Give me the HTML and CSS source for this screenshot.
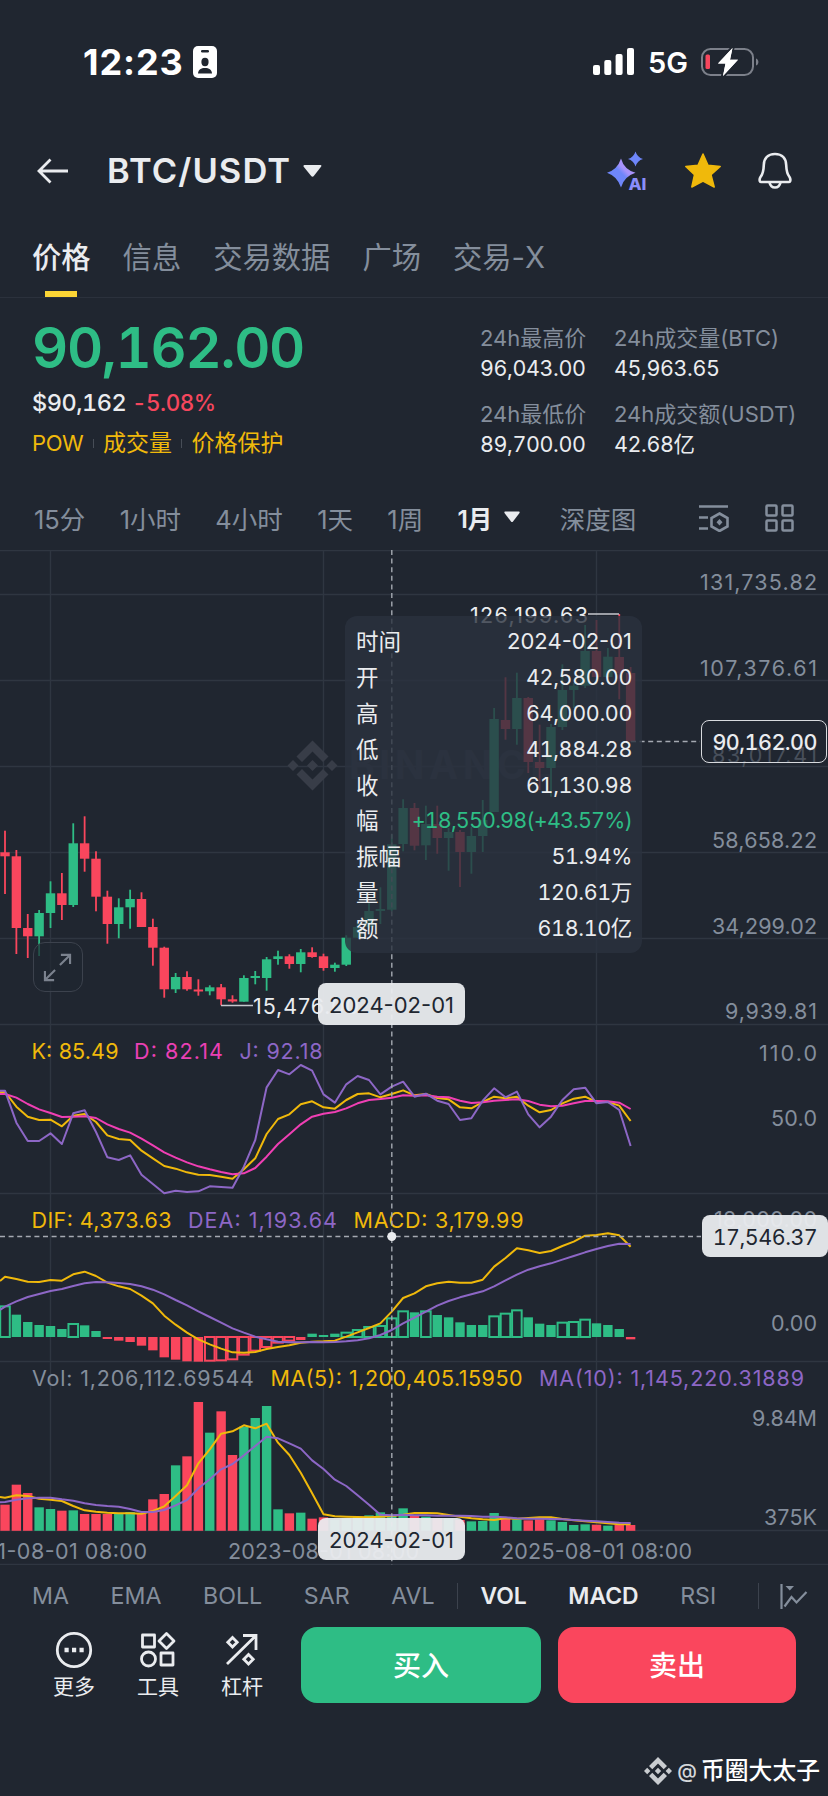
FILE: index.html
```html
<!DOCTYPE html>
<html lang="zh-CN">
<head>
    <meta charset="UTF-8">
    <meta name="viewport" content="width=device-width, initial-scale=1.0">
    <title>BTC/USDT</title>
    <link rel="stylesheet" href="styles.css">
</head>
<body>
    <div class="status-bar">
        <div class="status-left">
            <span class="clock">12:23</span>
            <svg width="24" height="32" viewBox="0 0 24 32">
                <rect width="24" height="32" rx="5" fill="#fff"/>
                <rect x="8" y="4" width="8" height="2.4" rx="1.2" fill="#202630"/>
                <ellipse cx="12" cy="16" rx="3.6" ry="4.2" fill="#202630"/>
                <path d="M5 27.5c.3-4 3-5.500 7-5.500s6.700 1.500 7 5.500z" fill="#202630"/>
            </svg>
        </div>
        <div class="status-right">
            <svg width="42" height="28" viewBox="0 0 42 28" fill="#fff">
                <rect x="0" y="17" width="7" height="10" rx="2"/>
                <rect x="11.300" y="12" width="7" height="15" rx="2"/>
                <rect x="22.600" y="6" width="7" height="21" rx="2"/>
                <rect x="34" y="0" width="7" height="27" rx="2"/>
            </svg>
            <span class="network">5G</span>
            <svg width="58" height="30" viewBox="0 0 58 30">
                <rect x="1" y="2" width="51" height="26" rx="8.500" fill="none" stroke="#7c808a" stroke-width="2"/>
                <path d="M55 11.500c3.200 1 3.200 6 0 7z" fill="#7c808a"/>
                <rect x="4.500" y="7.500" width="4.500" height="14.500" rx="1.500" fill="#f6465d"/>
                <path d="M31.500 1L17 16.500h7.500L22 29 37 12.800h-8z" fill="#fff" stroke="#202630" stroke-width="4" paint-order="stroke"/>
                <path d="M31.500 1L17 16.500h7.500L22 29 37 12.800h-8z" fill="#fff"/>
            </svg>
        </div>
    </div>

    <header class="nav-bar">
        <svg class="back" width="32" height="26" viewBox="0 0 32 26" fill="none" stroke="#eaecef" stroke-width="2.800">
            <path d="M31 13H2.500M13.500 1.500L2 13l11.500 11.500"/>
        </svg>
        <h1 class="pair">BTC/USDT</h1>
        <svg width="19" height="12" viewBox="0 0 19 12"><path d="M1.500 0h16q1.500.3.500 1.800L11 10.800q-1.500 1.700-3 0L.7 1.800Q0 .3 1.500 0z" fill="#eaecef"/></svg>
        <div class="nav-icons">
            <svg width="40" height="40" viewBox="0 0 40 40">
                <defs>
                    <linearGradient id="ai" x1="0" y1="1" x2="1" y2="0">
                        <stop offset=".5" stop-color="#6e86fa"/>
                        <stop offset=".62" stop-color="#a893fb"/>
                    </linearGradient>
                </defs>
                <path d="M14 7.500Q17 18.500 28.500 21.800 17 25.500 14 36.500 10.500 25.500 0 21.800 10.500 18.500 14 7.500z" fill="url(#ai)"/>
                <path d="M28.500.5q1.800 5.800 7.500 7.500-5.700 1.700-7.500 7.500Q26.700 9.700 21 8 26.700 6.300 28.500.5z" fill="#6e86fa"/>
                <text x="21.500" y="38.500" class="ai-text" textLength="18" lengthAdjust="spacingAndGlyphs">AI</text>
            </svg>
            <svg width="36" height="36" viewBox="0 0 36 36"><path d="M18 1l5 11.200 12.200 1.200-9.200 8.200 3.200 12.400L18 28.200 6.800 34 9.500 21.600.8 13.400 13 12.200z" fill="#f0b90b" stroke="#f0b90b" stroke-width="1.500" stroke-linejoin="round"/></svg>
            <svg width="34" height="38" viewBox="0 0 34 38" fill="none" stroke="#eaecef" stroke-width="2.600" stroke-linejoin="round">
                <path d="M17 2C9.500 2 6 7 5.800 13c-.2 6-.5 8.500-3.300 12-1.300 2 -1.200 5 .5 5h28c1.700 0 1.800-3 .5-5-2.800-3.500-3.100-6-3.300-12C28 7 24.500 2 17 2z"/>
                <path d="M11.500 30.500c.8 3.500 2.500 5 5.500 5s4.700-1.500 5.500-5"/>
            </svg>
        </div>
    </header>

    <nav class="tabs">
        <a class="tab active">价格</a>
        <a class="tab">信息</a>
        <a class="tab">交易数据</a>
        <a class="tab">广场</a>
        <a class="tab">交易-X</a>
    </nav>

    <section class="ticker">
        <div class="price-box">
            <div class="price">90,162.00</div>
            <div class="fiat">$90,162 <span class="down">-5.08%</span></div>
            <div class="tags"><span class="algo">POW</span><i></i><span>成交量</span><i></i><span>价格保护</span></div>
        </div>
        <div class="stats">
            <div class="stat"><label>24h最高价</label><b>96,043.00</b></div>
            <div class="stat"><label>24h成交量(BTC)</label><b>45,963.65</b></div>
            <div class="stat"><label>24h最低价</label><b>89,700.00</b></div>
            <div class="stat"><label>24h成交额(USDT)</label><b>42.68亿</b></div>
        </div>
    </section>

    <div class="intervals">
        <span>15分</span>
        <span>1小时</span>
        <span>4小时</span>
        <span>1天</span>
        <span>1周</span>
        <span class="active">1月<svg width="16" height="12" viewBox="0 0 16 12"><path d="M1 .5h14q1 .3.500 1.500L9 10.500q-1 1-2 0L.5 2Q0 .8 1 .5z" fill="#eaecef"/></svg></span>
        <span>深度图</span>
        <div class="chart-tools">
            <svg width="30" height="28" viewBox="0 0 30 28" fill="none" stroke="#848e9c" stroke-width="2.600">
                <path d="M0 2.500h29M0 13.500h9M0 24.500h9"/>
                <path d="M20.500 9.500l8 4.500v8.500l-8 4.500-8-4.500V14z"/>
                <path d="M20.500 15l3 3.200-3 3.200-3-3.200z" fill="#848e9c" stroke="none"/>
            </svg>
            <svg width="29" height="28" viewBox="0 0 29 28" fill="none" stroke="#848e9c" stroke-width="2.500">
                <rect x="1.500" y="1.500" width="10" height="10" rx="1"/>
                <rect x="17.500" y="1.500" width="10" height="10" rx="1"/>
                <rect x="1.500" y="16.500" width="10" height="10" rx="1"/>
                <rect x="17.500" y="16.500" width="10" height="10" rx="1"/>
            </svg>
        </div>
    </div>

    <section class="chart">
        <svg class="plot" width="828" height="1015" viewBox="0 550 828 1015">
            <g class="grid">
                <path d="M0 594.500H828M0 680.500H828M0 766.500H828M0 852.500H828M0 938.500H828"/>
                <path d="M50.500 550V1531M323.500 550V1531M596.500 550V1531"/>
                <path d="M0 550.500H828M0 1024.500H828M0 1193.500H828M0 1361.500H828M0 1530.500H828M0 1564.500H828"/>
            </g>

            <g class="watermark">
                <path d="M312.500 740.500l16 16-5.500 5.500-10.500-10.500L302 762l-5.500-5.500zM312.500 790.500l16-16-5.500-5.500-10.500 10.500L302 769l-5.500 5.500zM293 760l5.500 5.500-5.500 5.500-5.500-5.500zM332 760l5.500 5.500-5.500 5.500-5.500-5.500zM312.500 760l5.500 5.500-5.500 5.500-5.500-5.500z"/>
                <text x="349" y="779" textLength="205">BINANCE</text>
            </g>

            <g id="candles"></g>
            <g id="kdj"></g>
            <g id="macd"></g>
            <g id="volume"></g>

            <!-- high / low marks -->
            <path class="mark-line" d="M588 614H619M221 1005.500H253"/>
            <text class="mark" x="470" y="622.500" textLength="118">126,199.63</text>
            <text class="mark" x="253" y="1013.500" textLength="106">15,476.00</text>

            <g class="axis">
                <text x="700" y="590" textLength="117">131,735.82</text>
                <text x="700" y="676" textLength="117">107,376.61</text>
                <text x="712" y="762.500" textLength="105" opacity=".4">83,017.41</text>
                <text x="712" y="848" textLength="105">58,658.22</text>
                <text x="712" y="934" textLength="105">34,299.02</text>
                <text x="725" y="1018.500" textLength="92">9,939.81</text>
                <text x="759" y="1061" textLength="58">110.0</text>
                <text x="771" y="1125.500" textLength="46">50.0</text>
                <text x="714" y="1227" textLength="103">18,000.00</text>
                <text x="771" y="1330.500" textLength="46">0.00</text>
                <text x="752" y="1425.500" textLength="65">9.84M</text>
                <text x="764" y="1525" textLength="53">375K</text>
                <text class="date" x="-44" y="1558.500" textLength="191">2021-08-01 08:00</text>
                <text class="date" x="228" y="1558.500" textLength="191">2023-08-01 08:00</text>
                <text class="date" x="501" y="1558.500" textLength="191">2025-08-01 08:00</text>
            </g>

            <g class="legend">
                <text x="31.500" y="1059" textLength="87" fill="#f0b90b">K: 85.49</text>
                <text x="134" y="1059" textLength="89" fill="#eb40b5">D: 82.14</text>
                <text x="239.500" y="1059" textLength="83" fill="#8d67c6">J: 92.18</text>
                <text x="31.500" y="1227.500" textLength="140" fill="#f0b90b">DIF: 4,373.63</text>
                <text x="188" y="1227.500" textLength="149" fill="#8d67c6">DEA: 1,193.64</text>
                <text x="353.500" y="1227.500" textLength="170" fill="#f0b90b">MACD: 3,179.99</text>
                <text x="32" y="1386" textLength="222" fill="#848e9c">Vol: 1,206,112.69544</text>
                <text x="270.500" y="1386" textLength="252" fill="#f0b90b">MA(5): 1,200,405.15950</text>
                <text x="539" y="1386" textLength="265" fill="#8d67c6">MA(10): 1,145,220.31889</text>
            </g>

            <path class="last-line" d="M631 741.500H700"/>
            <path class="cross-line" d="M391.800 550V1565M0 1236.500H701"/>
            <circle cx="391.800" cy="1236.500" r="4.500" fill="#eaecef"/>
        </svg>

        <button class="expand">
            <svg width="30" height="30" viewBox="0 0 30 30" fill="none" stroke="#7b828e" stroke-width="2.200">
                <path d="M17.500 12.500L28 2M18.500 2H28v9.500M12.500 17.500L2 28M2 18.500V28h9.500"/>
            </svg>
        </button>

        <div class="tooltip">
            <div class="row"><span>时间</span><span class="date">2024-02-01</span></div>
            <div class="row"><span>开</span><span class="num">42,580.00</span></div>
            <div class="row"><span>高</span><span class="num">64,000.00</span></div>
            <div class="row"><span>低</span><span class="num">41,884.28</span></div>
            <div class="row"><span>收</span><span class="num">61,130.98</span></div>
            <div class="row"><span>幅</span><span class="num up">+18,550.98(+43.57%)</span></div>
            <div class="row"><span>振幅</span><span class="num">51.94%</span></div>
            <div class="row"><span>量</span><span class="num">120.61万</span></div>
            <div class="row"><span>额</span><span class="num">618.10亿</span></div>
        </div>

        <div class="last-price">90,162.00</div>
        <div class="badge date-badge date date-top">2024-02-01</div>
        <div class="badge value-badge">17,546.37</div>
        <div class="badge date-badge date date-bottom">2024-02-01</div>
    </section>

    <div class="indicators">
        <span>MA</span>
        <span>EMA</span>
        <span>BOLL</span>
        <span>SAR</span>
        <span>AVL</span>
        <i class="split"></i>
        <span class="active">VOL</span>
        <span class="active">MACD</span>
        <span>RSI</span>
        <i class="end"></i>
        <svg width="28" height="25" viewBox="0 0 28 25" fill="none" stroke="#848e9c" stroke-width="2.200">
            <path d="M1.500 0v25M4.500 22.500l7-9.500 5 5.500L26.500 8"/>
            <path d="M5.500 2h8.500l-4.200 4.500z" fill="#848e9c" stroke="none"/>
        </svg>
    </div>

    <footer class="actions">
        <div class="action">
            <svg width="38" height="38" viewBox="0 0 38 38" fill="none" stroke="#eaecef" stroke-width="2.800">
                <circle cx="19" cy="19" r="16.700"/>
                <path d="M9.500 19h4.200M17 19h4.200M24.500 19h4.200" stroke-width="4.500"/>
            </svg>
            <span>更多</span>
        </div>
        <div class="action">
            <svg width="38" height="38" viewBox="0 0 38 38" fill="none" stroke="#eaecef" stroke-width="2.800" stroke-linejoin="round">
                <rect x="3.500" y="4" width="12" height="12"/>
                <path d="M27.500 2.500l7.500 7.500-7.500 7.500L20 10z"/>
                <circle cx="9.500" cy="28" r="7"/>
                <rect x="22" y="22" width="12" height="12"/>
            </svg>
            <span>工具</span>
        </div>
        <div class="action">
            <svg width="38" height="38" viewBox="0 0 38 38" fill="none" stroke="#eaecef" stroke-width="2.800">
                <path d="M4 33L33 4.500M20 4.500h13V19"/>
                <path d="M9.500 6.500l4.700 4.700-4.700 4.700-4.700-4.700zM25.500 23.500l4.700 4.700-4.700 4.700-4.700-4.700z"/>
            </svg>
            <span>杠杆</span>
        </div>
        <button class="trade buy">买入</button>
        <button class="trade sell">卖出</button>
    </footer>

    <div class="credit">
        <svg width="28" height="28" viewBox="0 0 28 28" fill="#c9ccd0">
            <path d="M14 0l9 9-3.300 3.300L14 6.600l-5.700 5.700L5 9zM14 28l9-9-3.300-3.300L14 21.400l-5.700-5.700L5 19zM3.200 10.800L6.400 14l-3.200 3.200L0 14zM24.800 10.800L28 14l-3.200 3.200-3.200-3.200zM14 10.800l3.200 3.200-3.200 3.200-3.200-3.200z"/>
        </svg>
        <span class="at">@</span>
        <span>币圈大太子</span>
    </div>

    <script src="script.js"></script>
</body>
</html>
```
FILE: styles.css
```css
body {
    margin: 0;
    width: 828px;
    height: 1796px;
    overflow: hidden;
    background: #202630;
    color: #eaecef;
    font-family: Inter, "Noto Sans CJK SC", sans-serif;
    font-size: 22px;
}
svg {
    display: block;
    flex-shrink: 0;
}
button {
    padding: 0;
    border: 0;
    color: #fff;
    font-family: inherit;
}

/* status bar */
.status-bar {
    display: flex;
    justify-content: space-between;
    align-items: center;
    height: 124px;
    padding: 0 69px 0 83px;
    color: #fff;
}
.status-left {
    display: flex;
    align-items: center;
    gap: 9px;
}
.clock {
    width: 101px;
    font-size: 36px;
    font-weight: 700;
    letter-spacing: 0.9px;
}
.status-right {
    display: flex;
    align-items: center;
}
.network {
    margin: 0 13px 0 13px;
    font-size: 29px;
    font-weight: 600;
}

/* nav bar */
.nav-bar {
    display: flex;
    align-items: center;
    height: 93px;
    padding: 0 36px 0 37px;
}
.pair {
    margin: 0 12px 0 38px;
    font-size: 34.5px;
    font-weight: 600;
    letter-spacing: 1.1px;
}
.nav-icons {
    display: flex;
    align-items: center;
    gap: 37.5px;
    margin-left: auto;
}
.ai-text {
    font-size: 16.5px;
    font-weight: 800;
    fill: #8a8efb;
}

/* tabs */
.tabs {
    display: flex;
    gap: 32px;
    height: 80px;
    padding-left: 32px;
    border-bottom: 1px solid #2b313c;
}
.tab {
    position: relative;
    font-size: 29.3px;
    line-height: 82px;
    color: #848e9c;
}
.tab.active {
    color: #eaecef;
    font-weight: 500;
}
.tab.active::after {
    content: "";
    position: absolute;
    left: 13px;
    bottom: 0;
    width: 32px;
    height: 6px;
    background: #fcd535;
}

/* price and 24h stats */
.ticker {
    display: flex;
    justify-content: space-between;
    height: 187px;
    padding: 0 0 0 32px;
}
.price, .fiat, .stat b, .num, .last-price, .value-badge {
    font-variant-numeric: tabular-nums;
}
.price {
    margin-top: 16px;
    font-size: 56px;
    line-height: 68px;
    font-weight: 600;
    letter-spacing: -1.3px;
    color: #2ebd85;
}
.fiat {
    margin-top: 6px;
    font-size: 23.5px;
    line-height: 30px;
    font-weight: 500;
    letter-spacing: -0.5px;
}
.down {
    font-size: 22.5px;
    color: #f6465d;
}
.tags {
    display: flex;
    align-items: center;
    margin-top: 10px;
    font-size: 23px;
    line-height: 30px;
    color: #f0b90b;
}
.algo {
    font-size: 22px;
    letter-spacing: -0.4px;
}
.tags i {
    width: 1px;
    height: 9px;
    margin: 0 9.3px;
    background: #474d57;
}
.stats {
    display: grid;
    grid-template-columns: 134px 214px;
    grid-auto-rows: 76px;
    padding-top: 24px;
}
.stat label, .stat b {
    display: block;
    height: 30px;
    line-height: 32px;
    font-weight: 400;
    white-space: nowrap;
}
.stat b {
    font-size: 21.5px;
    letter-spacing: -0.4px;
}
.stat label {
    color: #848e9c;
}

/* intervals */
.intervals {
    display: flex;
    align-items: center;
    gap: 34.3px;
    height: 64px;
    padding: 0 34px 1px;
    font-size: 25.5px;
    color: #848e9c;
}
.intervals .active {
    display: flex;
    align-items: center;
    gap: 12px;
    margin-right: 5px;
    color: #eaecef;
    font-size: 24.6px;
    font-weight: 600;
}
.chart-tools {
    display: flex;
    gap: 36px;
    margin-left: auto;
    padding-top: 2px;
}

/* chart */
.chart {
    position: relative;
    height: 1015px;
}
.grid path {
    fill: none;
    stroke: #2f3641;
    stroke-width: 1.4;
}
.watermark {
    fill: #383d48;
}
.watermark text {
    font-size: 39px;
    font-weight: 700;
    fill: #2f3540;
}
.green { fill: #2ebd85; }
.red { fill: #fa465d; }
.hollow { fill: none; stroke-width: 2; }
.hollow.green { stroke: #2ebd85; fill: none; }
.hollow.red { stroke: #fa465d; fill: none; }
.line {
    fill: none;
    stroke-width: 2;
    stroke-linejoin: round;
}
.yellow { stroke: #f0b90b; }
.pink { stroke: #f03fb4; }
.purple { stroke: #8d67c6; }
.axis text, .legend text, .mark {
    font-size: 21.5px;
}
.axis text {
    fill: #848e9c;
}
.mark {
    fill: #eaecef;
}
.mark-line {
    stroke: #c5c8cd;
    stroke-width: 1.5;
}
.last-line, .cross-line {
    fill: none;
    stroke: #a4a9b1;
    stroke-width: 1.4;
    stroke-dasharray: 5 3.6;
}
.expand {
    position: absolute;
    left: 33px;
    top: 392px;
    box-sizing: border-box;
    width: 50px;
    height: 50px;
    padding: 9px;
    border: 1.5px solid #3c424d;
    border-radius: 12px;
    background: rgba(32, 38, 48, 0.7);
}
.expand svg {
    width: 29px;
    height: 29px;
}
.tooltip {
    position: absolute;
    left: 345px;
    top: 66px;
    box-sizing: border-box;
    width: 297px;
    height: 337px;
    padding: 7px 10px 7px 11px;
    border-radius: 12px;
    background: rgba(42, 50, 62, 0.8);
}
.row {
    display: flex;
    justify-content: space-between;
    height: 35.9px;
    line-height: 37px;
    font-size: 22.5px;
}
.num {
    font-size: 21.5px;
    letter-spacing: -0.35px;
}
.row .date {
    font-size: 22px;
}
.up {
    color: #2ebd85;
    letter-spacing: -0.85px;
}
.last-price {
    position: absolute;
    right: 1px;
    top: 170px;
    box-sizing: border-box;
    width: 126px;
    height: 43px;
    padding-right: 9px;
    border: 1.5px solid #d8dade;
    border-radius: 8px;
    line-height: 42px;
    text-align: right;
    font-size: 21.5px;
    font-weight: 500;
    letter-spacing: -0.5px;
}
.badge {
    position: absolute;
    height: 42px;
    border-radius: 8px;
    background: rgba(234, 236, 239, 0.95);
    color: #202630;
    line-height: 44px;
    text-align: center;
}
.date-badge {
    left: 318px;
    width: 147px;
}
.date-top {
    top: 433px;
}
.date-bottom {
    top: 968px;
}
.value-badge {
    right: 0;
    top: 665px;
    width: 126px;
    font-size: 21.5px;
    letter-spacing: -0.5px;
}

/* indicators */
.indicators {
    display: flex;
    align-items: center;
    gap: 41.6px;
    height: 62px;
    padding-left: 32px;
    font-size: 23.2px;
    line-height: 64px;
    color: #848e9c;
}
.indicators .active {
    color: #eaecef;
    font-size: 22.9px;
    font-weight: 600;
}
.indicators i {
    width: 1.5px;
    height: 26px;
    background: #3c424d;
}
.split {
    margin: 0 -19.5px;
}
.end {
    margin-right: -21px;
}

/* bottom actions */
.actions {
    display: flex;
    height: 76px;
    padding-left: 32px;
}
.action {
    display: flex;
    flex-direction: column;
    align-items: center;
    width: 84px;
    padding-top: 4px;
    font-size: 21px;
    line-height: 36px;
}
.trade {
    width: 240px;
    height: 76px;
    padding-bottom: 3px;
    border-radius: 16px;
    font-size: 28px;
    font-weight: 500;
}
.buy {
    margin-left: 17px;
    background: #2ebd85;
}
.sell {
    width: 238px;
    margin-left: 17px;
    background: #fa465d;
}
.credit {
    display: flex;
    justify-content: flex-end;
    align-items: center;
    margin-top: 50px;
    padding-right: 8px;
    font-size: 23.8px;
    line-height: 36px;
    font-weight: 500;
    color: #fff;
}
.at {
    margin: 0 4px 0 5px;
    font-size: 20px;
    color: #d5d7da;
}
```
FILE: script.js
```js
const NS = 'http://www.w3.org/2000/svg';
const PITCH = 11.375;
const FIRST = 5;
const BODY = 9.4;

// color, high, body top, body bottom, low
const candles = [
    ['r', 830.7, 852.3, 856.3, 894], ['r', 850, 856.3, 928, 954], ['r', 914, 928, 936.3, 958],
    ['g', 910, 913, 936.3, 956], ['g', 881.3, 893.3, 913, 928], ['r', 873, 893.3, 905, 920],
    ['g', 823.3, 843.3, 905, 907], ['r', 816.3, 843.3, 858.7, 871.7], ['r', 851.3, 858.7, 896.7, 911.3],
    ['r', 890.7, 896.7, 924, 943.7], ['g', 898.3, 907.3, 924, 938.3], ['g', 889.7, 899, 907.3, 928.7],
    ['r', 892.3, 899, 927, 927], ['r', 918.7, 927, 947.7, 965.7], ['r', 946.7, 947.7, 989.3, 997.7],
    ['g', 973, 977, 989.3, 993], ['r', 971.3, 977, 989.3, 990.7], ['r', 979.3, 989.5, 991.5, 995.7],
    ['g', 985.3, 987.3, 991.3, 995.3], ['r', 984, 987.3, 999.3, 1005.3], ['r', 995.3, 999.3, 1001.5, 1002.7],
    ['g', 975.3, 978, 1001.7, 1001.7], ['g', 971, 976, 978, 984.3], ['g', 957, 959.3, 978, 990.7],
    ['g', 950.7, 956.3, 959, 964.7], ['r', 954.3, 956.3, 964, 968.7], ['g', 949, 952.3, 964, 972.3],
    ['r', 947.3, 952.3, 957, 957.7], ['r', 953.7, 956.3, 968, 970.7], ['g', 962.7, 964.7, 968, 971.7],
    ['g', 935.3, 937.7, 964.7, 966], ['g', 923, 927, 937.7, 938], ['g', 903, 911, 927, 928],
    ['g', 887.3, 909, 911, 924], ['g', 834.3, 844.3, 909.7, 911.3], ['g', 799.3, 808, 844, 851.3],
    ['r', 803, 808, 845.7, 850.3], ['g', 805.7, 824, 845.3, 860], ['r', 805.7, 824, 838, 853.7],
    ['g', 828, 832, 838, 870.7], ['r', 830, 832, 852, 887], ['g', 827, 836, 852, 873.7],
    ['g', 800, 820, 836, 852], ['g', 708, 719, 812, 812], ['r', 677.3, 720, 729, 739.7],
    ['g', 672.7, 698, 729, 744.7], ['r', 697, 698, 762, 773], ['r', 724.7, 762, 768, 790],
    ['g', 724, 727, 768, 796.7], ['g', 664.3, 690, 727, 730], ['g', 683, 685.7, 690, 708],
    ['g', 625, 651, 685.7, 688], ['r', 620, 651, 677, 677], ['g', 648, 656.7, 677, 677],
    ['r', 614, 657, 673, 699.3], ['r', 667, 673, 741.3, 741.3]
];

// offsets below 1020, three units to a pixel
const k = [216, 260, 290, 300, 299, 319, 287, 282, 306, 346, 357, 360, 392, 415, 438, 446, 457, 464, 465, 470, 476, 448, 415, 342, 297, 283, 253, 244, 262, 266, 240, 222, 220, 232, 222, 211, 226, 222, 234, 238, 262, 265, 246, 230, 235, 230, 257, 277, 270, 250, 236, 230, 246, 246, 257, 303];
const d = [222, 233, 252, 268, 279, 291, 290, 289, 294, 313, 327, 338, 356, 376, 397, 413, 427, 439, 448, 456, 463, 460, 444, 410, 372, 343, 313, 290, 281, 276, 265, 250, 240, 237, 233, 226, 227, 226, 230, 232, 242, 249, 247, 242, 240, 238, 243, 254, 259, 257, 250, 243, 243, 244, 248, 267];
const j = [212, 308, 363, 363, 340, 372, 280, 271, 336, 412, 420, 406, 464, 492, 520, 512, 516, 514, 499, 501, 503, 440, 360, 202, 150, 163, 135, 152, 223, 248, 193, 168, 180, 223, 200, 185, 230, 221, 242, 252, 300, 295, 242, 205, 232, 215, 283, 322, 290, 240, 208, 203, 250, 246, 270, 378];
const dif = [770, 777, 785, 786, 780, 782, 763, 755, 768, 788, 799, 807, 827, 850, 887, 914, 938, 958, 973, 986, 997, 998, 996, 987, 981, 976, 968, 965, 964, 962, 950, 937, 924, 910, 875, 834, 820, 799, 790, 785, 788, 788, 779, 740, 714, 685, 691, 699, 693, 678, 665, 647, 645, 640, 646, 680];
const dea = [860, 844, 831, 822, 813, 807, 798, 790, 786, 787, 789, 792, 799, 809, 823, 840, 856, 874, 891, 908, 925, 938, 950, 958, 965, 967, 967, 966, 967, 966, 964, 961, 955, 945, 930, 910, 893, 875, 857, 843, 832, 823, 814, 799, 781, 764, 749, 739, 730, 719, 708, 697, 687, 678, 671, 672];
const macd = [859, 884, 906, 915, 918, 927, 912, 916, 933, 957, 962, 966, 977, 991, 1012, 1019, 1024, 1025, 1022, 1021, 1018, 1004, 992, 981, 968, 962, 960, 941, 945, 941, 938, 930, 921, 918, 895, 874, 877, 874, 885, 892, 907, 915, 915, 889, 881, 871, 892, 911, 915, 908, 906, 899, 910, 915, 927, 958];
const hollow = [0, 6, 18, 19, 20, 21, 22, 23, 24, 25, 30, 31, 32, 33, 34, 35, 37, 43, 44, 45, 49, 50, 51];

// offsets below 1350
const vol = [464, 404, 429, 472, 477, 482, 481, 492, 492, 492, 490, 486, 490, 448, 432, 346, 319, 156, 248, 184, 315, 230, 204, 168, 478, 490, 488, 506, 502, 510, 505, 500, 496, 487, 496, 475, 498, 500, 505, 505, 510, 514, 513, 489, 507, 508, 511, 508, 511, 516, 525, 523, 524, 527, 524, 525];
const ma5 = [443, 436, 438, 446, 449, 453, 468, 481, 485, 488, 490, 490, 491, 483, 469, 438, 406, 340, 298, 251, 244, 226, 235, 221, 278, 315, 368, 430, 493, 499, 500, 501, 502, 500, 498, 494, 489, 489, 490, 495, 500, 505, 508, 510, 505, 506, 504, 502, 502, 507, 511, 514, 517, 520, 523, 523];
const ma10 = [456, 449, 445, 443, 443, 448, 452, 460, 465, 468, 470, 477, 486, 486, 480, 466, 450, 415, 388, 358, 342, 316, 288, 260, 265, 280, 296, 331, 357, 389, 408, 436, 464, 494, 496, 494, 496, 496, 497, 497, 497, 498, 500, 500, 502, 505, 506, 506, 507, 508, 510, 512, 514, 516, 518, 519];

const x = i => FIRST + i * PITCH;

function rect(parent, left, top, width, height, cls) {
    const el = document.createElementNS(NS, 'rect');
    el.setAttribute('x', left);
    el.setAttribute('y', top);
    el.setAttribute('width', width);
    el.setAttribute('height', Math.max(height, 0.5));
    el.setAttribute('class', cls);
    document.getElementById(parent).appendChild(el);
}

function line(parent, values, base, cls, start) {
    const el = document.createElementNS(NS, 'polyline');
    const points = values.map((v, i) => `${x(i)},${base + v / 3}`);
    points.unshift(`0,${base + start / 3}`);
    el.setAttribute('points', points.join(' '));
    el.setAttribute('class', 'line ' + cls);
    document.getElementById(parent).appendChild(el);
}

candles.forEach(([c, high, top, bottom, low], i) => {
    const cls = c === 'g' ? 'green' : 'red';
    rect('candles', x(i) - 0.9, high, 1.8, low - high, cls);
    rect('candles', x(i) - BODY / 2, top, BODY, bottom - top, cls);

    const volTop = 1350 + vol[i] / 3;
    rect('volume', x(i) - BODY / 2, volTop, BODY, 1530.8 - volTop, cls);
});

const zero = 1020 + 951 / 3;
macd.forEach((v, i) => {
    const y = 1020 + v / 3;
    const cls = v < 951 ? 'green' : 'red';
    const top = Math.min(y, zero);
    const height = Math.abs(y - zero);
    if (hollow.includes(i)) {
        rect('macd', x(i) - 4.8, top, 9.6, height, 'hollow ' + cls);
    } else {
        rect('macd', x(i) - BODY / 2, top, BODY, height, cls);
    }
});

line('kdj', k, 1020, 'yellow', 217);
line('kdj', d, 1020, 'pink', 222);
line('kdj', j, 1020, 'purple', 212);
line('macd', dif, 1020, 'yellow', 783);
line('macd', dea, 1020, 'purple', 870);
line('volume', ma5, 1350, 'yellow', 441);
line('volume', ma10, 1350, 'purple', 457);
```
